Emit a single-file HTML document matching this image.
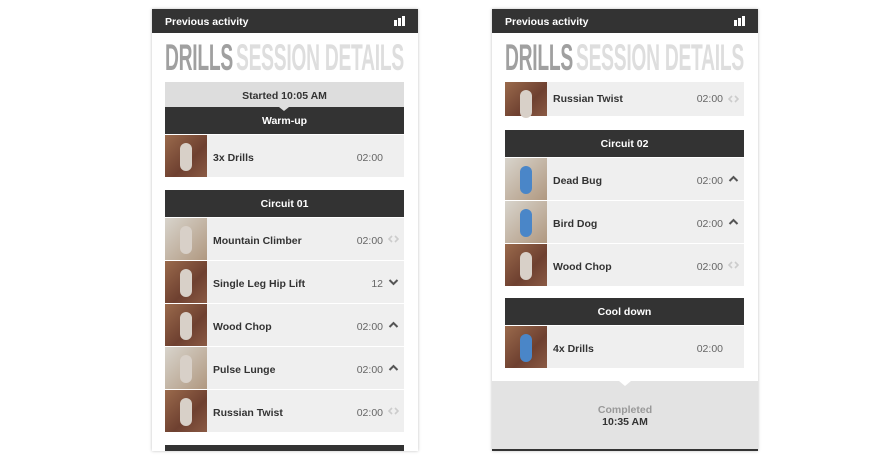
<!DOCTYPE html>
<html><head><meta charset="utf-8"><style>
*{margin:0;padding:0;box-sizing:border-box}
body{width:870px;height:460px;background:#fff;position:relative;overflow:hidden;font-family:"Liberation Sans",sans-serif}
.ph{position:absolute;top:9px;width:266px;height:442px;background:#fff;box-shadow:0 0 3px rgba(0,0,0,.25);overflow:hidden}
.hd{position:absolute;left:0;top:0;width:266px;height:24px;background:#333;color:#fff;font-size:10.5px;font-weight:bold;line-height:26px;padding-left:13px}
.bars{position:absolute;right:13px;top:7px;width:11px;height:10px}
.bars i{position:absolute;bottom:0;width:3px;background:#fff}
.tt{position:absolute;left:13px;top:30px;font-size:37px;font-weight:bold;line-height:37px;white-space:nowrap;transform:scaleX(.52);transform-origin:0 0;letter-spacing:-0.5px}
.tt b{color:#a0a0a0}.tt span{color:#dedede;margin-left:6px}
.bar{position:absolute;left:13px;width:239px;height:27px;background:#333;color:#fff;font-size:10.5px;font-weight:bold;text-align:center;line-height:29px}
.row{position:absolute;left:13px;width:239px;height:42px;background:#efefef}
.th{position:absolute;left:0;top:0;width:42px;height:42px;background:linear-gradient(135deg,#9a6a4c,#6e4030 60%,#8a5a44)}
.th:after{content:"";position:absolute;left:15px;top:8px;width:12px;height:28px;border-radius:6px;background:#d8d0c8}
.th.bl:after{background:#4a86c8}
.th.lt{background:linear-gradient(135deg,#d8d4cc,#b09880)}
.nm{position:absolute;left:48px;top:2px;line-height:42px;font-size:10.5px;font-weight:bold;color:#333}
.tm{position:absolute;right:21px;top:2px;line-height:42px;font-size:10.5px;color:#666}
.ic{position:absolute;right:5px;top:17px;width:11px;height:8px}
</style></head><body>
<svg width="0" height="0" style="position:absolute">
<defs>
<symbol id="up" viewBox="0 0 11 8"><path d="M1.5 6 L5.5 2 L9.5 6" fill="none" stroke="#555" stroke-width="2"/></symbol>
<symbol id="dn" viewBox="0 0 11 8"><path d="M1.5 2 L5.5 6 L9.5 2" fill="none" stroke="#555" stroke-width="2"/></symbol>
<symbol id="lr" viewBox="0 0 11 8"><path d="M4 1 L1 4 L4 7 M7 1 L10 4 L7 7" fill="none" stroke="#ccc" stroke-width="1.6"/></symbol>
</defs></svg>

<div class="ph" style="left:152px">
 <div class="hd">Previous activity<div class="bars"><i style="left:0;height:6px"></i><i style="left:4px;height:8px"></i><i style="left:8px;height:10px"></i></div></div>
 <div class="tt"><b>DRILLS</b><span>SESSION DETAILS</span></div>
 <div style="position:absolute;left:13px;top:73px;width:239px;height:25px;background:#ddd;font-size:10.5px;font-weight:bold;color:#333;text-align:center;line-height:28px">Started 10:05 AM</div>
 <div class="bar" style="top:98px">Warm-up</div>
 <div style="position:absolute;left:127px;top:98px;border:5px solid transparent;border-top:4px solid #ddd"></div>
 <div class="row" style="top:126px"><div class="th"></div><div class="nm">3x Drills</div><div class="tm">02:00</div></div>
 <div class="bar" style="top:181px">Circuit 01</div>
 <div class="row" style="top:209px"><div class="th lt"></div><div class="nm">Mountain Climber</div><div class="tm">02:00</div><svg class="ic"><use href="#lr"/></svg></div>
 <div class="row" style="top:252px"><div class="th"></div><div class="nm">Single Leg Hip Lift</div><div class="tm">12</div><svg class="ic"><use href="#dn"/></svg></div>
 <div class="row" style="top:295px"><div class="th"></div><div class="nm">Wood Chop</div><div class="tm">02:00</div><svg class="ic"><use href="#up"/></svg></div>
 <div class="row" style="top:338px"><div class="th lt"></div><div class="nm">Pulse Lunge</div><div class="tm">02:00</div><svg class="ic"><use href="#up"/></svg></div>
 <div class="row" style="top:381px"><div class="th"></div><div class="nm">Russian Twist</div><div class="tm">02:00</div><svg class="ic"><use href="#lr"/></svg></div>
 <div class="bar" style="top:436px"></div>
</div>

<div class="ph" style="left:492px">
 <div class="hd">Previous activity<div class="bars"><i style="left:0;height:6px"></i><i style="left:4px;height:8px"></i><i style="left:8px;height:10px"></i></div></div>
 <div class="tt"><b>DRILLS</b><span>SESSION DETAILS</span></div>
 <div class="row" style="top:73px;height:34px"><div class="th" style="height:34px"></div><div class="nm" style="line-height:30px">Russian Twist</div><div class="tm" style="line-height:30px">02:00</div><svg class="ic" style="top:13px"><use href="#lr"/></svg></div>
 <div class="bar" style="top:121px">Circuit 02</div>
 <div class="row" style="top:149px"><div class="th lt bl"></div><div class="nm">Dead Bug</div><div class="tm">02:00</div><svg class="ic"><use href="#up"/></svg></div>
 <div class="row" style="top:192px"><div class="th lt bl"></div><div class="nm">Bird Dog</div><div class="tm">02:00</div><svg class="ic"><use href="#up"/></svg></div>
 <div class="row" style="top:235px"><div class="th"></div><div class="nm">Wood Chop</div><div class="tm">02:00</div><svg class="ic"><use href="#lr"/></svg></div>
 <div class="bar" style="top:289px">Cool down</div>
 <div class="row" style="top:317px"><div class="th bl"></div><div class="nm">4x Drills</div><div class="tm">02:00</div></div>
 <div style="position:absolute;left:0;top:372px;width:266px;height:68px;background:#e3e3e3;text-align:center;font-size:10.5px;padding-top:23px;line-height:12px"><div style="color:#999;font-weight:bold">Completed</div><div style="color:#333;font-weight:bold">10:35 AM</div></div>
 <div style="position:absolute;left:127px;top:372px;border:6px solid transparent;border-top:5px solid #fff"></div>
 <div style="position:absolute;left:0;top:440px;width:266px;height:2px;background:#333"></div>
</div>
</body></html>
